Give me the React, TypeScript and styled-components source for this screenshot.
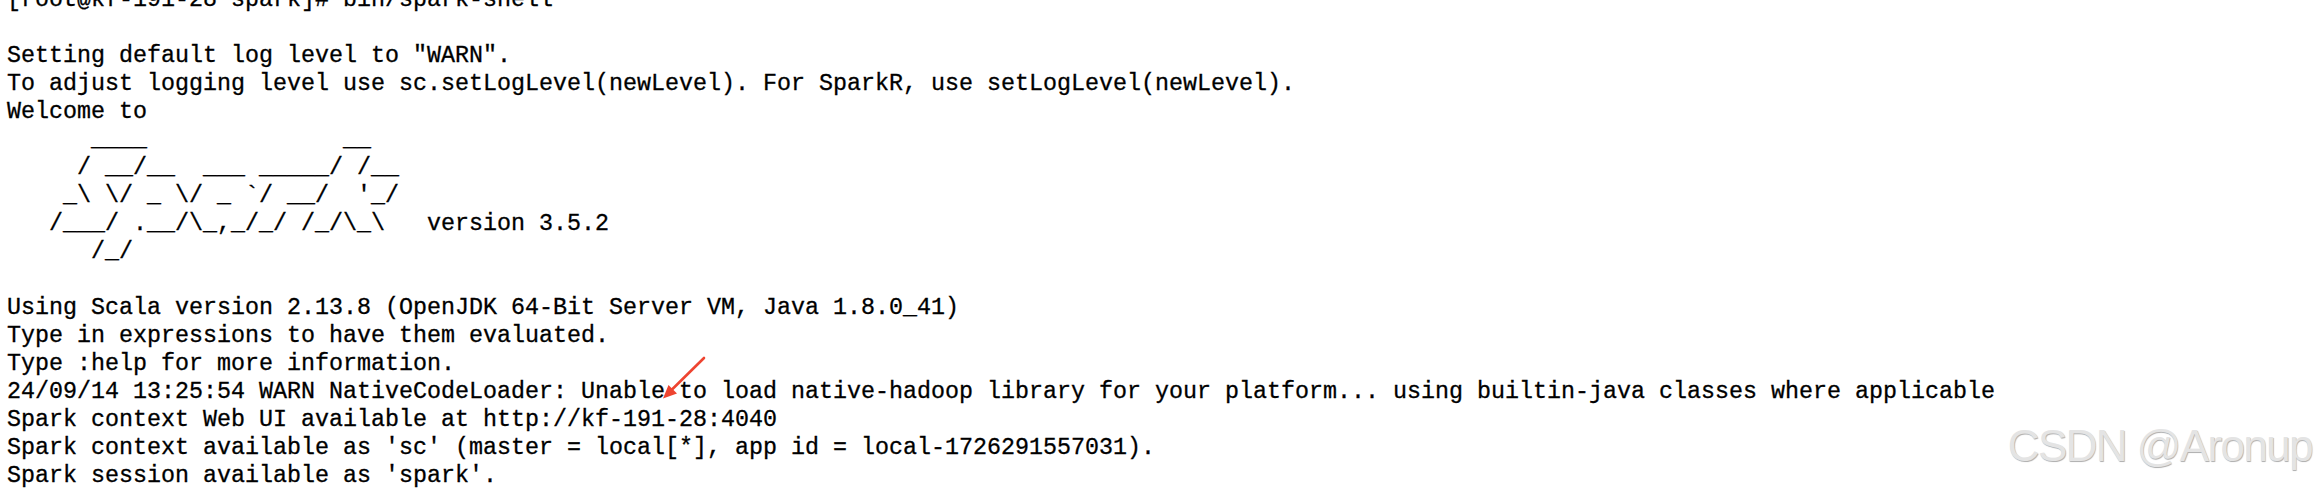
import React from "react";
import styled, { createGlobalStyle } from "styled-components";

const Global = createGlobalStyle`
  html, body {
    margin: 0;
    padding: 0;
    background: #ffffff;
  }
  #root {
    width: 2316px;
    height: 488px;
  }
`;

const Screen = styled.div`
  position: relative;
  width: 2316px;
  height: 488px;
  overflow: hidden;
  background: #ffffff;
`;

const Output = styled.div`
  display: flex;
  flex-direction: column;
  margin-top: -13.6px;
  padding-left: 7px;
  font-family: "Liberation Mono", "DejaVu Sans Mono", monospace;
  font-size: 23.333px;
  line-height: 28px;
  color: #000000;
  -webkit-text-stroke: 0.3px #000000;
`;

const Line = styled.div`
  white-space: pre;
  height: 28px;
`;

const Watermark = styled.div`
  position: absolute;
  right: 4px;
  top: 422px;
  font-family: "Liberation Sans", Arial, sans-serif;
  font-size: 44px;
  line-height: 48px;
  letter-spacing: -1.6px;
  color: #e4e4e4;
  text-shadow: 0.7px 0.7px 0.8px rgba(0, 0, 0, 0.32);
  white-space: nowrap;
`;

const ArrowSvg = styled.svg`
  position: absolute;
  left: 655px;
  top: 350px;
  width: 56px;
  height: 54px;
  overflow: visible;
`;

const lines: string[] = [
  "[root@kf-191-28 spark]# bin/spark-shell",
  "",
  'Setting default log level to "WARN".',
  "To adjust logging level use sc.setLogLevel(newLevel). For SparkR, use setLogLevel(newLevel).",
  "Welcome to",
  "      ____              __",
  "     / __/__  ___ _____/ /__",
  "    _\\ \\/ _ \\/ _ `/ __/  '_/",
  "   /___/ .__/\\_,_/_/ /_/\\_\\   version 3.5.2",
  "      /_/",
  "",
  "Using Scala version 2.13.8 (OpenJDK 64-Bit Server VM, Java 1.8.0_41)",
  "Type in expressions to have them evaluated.",
  "Type :help for more information.",
  "24/09/14 13:25:54 WARN NativeCodeLoader: Unable to load native-hadoop library for your platform... using builtin-java classes where applicable",
  "Spark context Web UI available at http://kf-191-28:4040",
  "Spark context available as 'sc' (master = local[*], app id = local-1726291557031).",
  "Spark session available as 'spark'.",
];

function Arrow() {
  // coordinates relative to svg origin (655, 350)
  const tip = { x: 8, y: 48.5 };
  return (
    <ArrowSvg viewBox="0 0 56 54">
      <line
        x1={49}
        y1={8}
        x2={17}
        y2={39.5}
        stroke="#ee4430"
        strokeWidth={2.6}
        strokeLinecap="round"
      />
      <polygon points={`${tip.x},${tip.y} 13.5,35 22,43.5`} fill="#ee4430" />
    </ArrowSvg>
  );
}

export default function App() {
  return (
    <>
      <Global />
      <Screen>
        <Output>
          {lines.map((l, i) => (
            <Line key={i}>{l}</Line>
          ))}
        </Output>
        <Arrow />
        <Watermark>CSDN @Aronup</Watermark>
      </Screen>
    </>
  );
}
